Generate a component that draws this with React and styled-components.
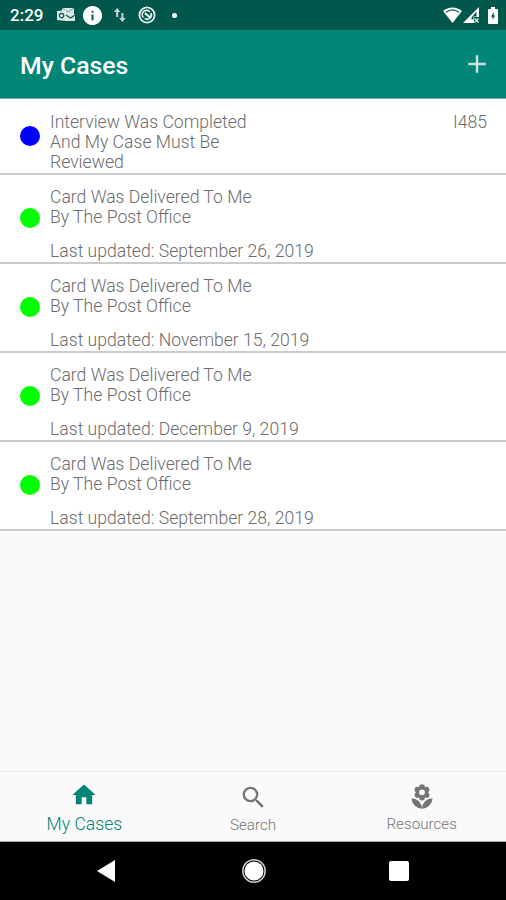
import React from 'react'
import styled, { createGlobalStyle } from 'styled-components'
import { MdAdd, MdHome, MdSearch, MdLocalFlorist, MdInfo } from 'react-icons/md'

const cases = [
    { color: '#0000ff', title: ['Interview Was Completed', 'And My Case Must Be', 'Reviewed'], form: 'I485' },
    { color: '#00ff00', title: ['Card Was Delivered To Me', 'By The Post Office'], updated: 'September 26, 2019' },
    { color: '#00ff00', title: ['Card Was Delivered To Me', 'By The Post Office'], updated: 'November 15, 2019' },
    { color: '#00ff00', title: ['Card Was Delivered To Me', 'By The Post Office'], updated: 'December 9, 2019' },
    { color: '#00ff00', title: ['Card Was Delivered To Me', 'By The Post Office'], updated: 'September 28, 2019' },
]

const MailIcon = () => (
    <svg width="18" height="16" viewBox="0 0 18 16">
        <path d="M5 1h12v7H5z" fill="#dce9e7" />
        <path d="M5 1l6 4 6-4" fill="none" stroke="#5f958d" strokeWidth="1" />
        <path d="M0 4l9-1v11l-9-1z" fill="#dce9e7" />
        <path d="M9 7h9v7H9z" fill="#dce9e7" />
        <circle cx="4.6" cy="8.6" r="2.2" fill="none" stroke="#00574b" strokeWidth="1.2" />
        <path d="M9 8l4.5 3L18 8" fill="none" stroke="#00574b" strokeWidth="1.1" />
    </svg>
)

const ArrowsIcon = () => (
    <svg width="12" height="16" viewBox="0 0 12 16" fill="#c4d9d6">
        <path d="M2.2 10V5H0l3.200-4 3.200 4H4.200v5zM7.400 6v5H5.200l3.200 4 3.200-4H9.400V6z" />
    </svg>
)

const SyncIcon = () => (
    <svg width="18" height="18" viewBox="0 0 18 18" fill="none" stroke="#e6efee">
        <circle cx="9" cy="9" r="7.6" strokeWidth="1.8" />
        <path d="M5.300 11.500a4.300 4.300 0 0 1 6.500-5.700M12.900 7a4.300 4.300 0 0 1-6.300 5.400" strokeWidth="1.700" />
        <path d="M6.800 7.200l5.300 4.300" strokeWidth="2.200" />
    </svg>
)

const WifiIcon = () => (
    <svg width="19" height="16" viewBox="0 0 19 16">
        <path d="M0 4.1C5.500-.6 13.500-.6 19 4.100L9.500 16z" fill="#fff" />
        <path d="M3 5.300c4-3 9-3 13 0" fill="none" stroke="#00574b" strokeWidth="1.200" />
    </svg>
)

const SignalIcon = () => (
    <svg width="16" height="16" viewBox="0 0 16 16">
        <path d="M0 16L16 0v10h-5v6z" fill="#fff" />
        <path d="M8.500 10.500l5-6v5h-3v3h-2z" fill="#00574b" />
        <path d="M11.500 11.500l4 4m0-4l-4 4" stroke="#c4d9d6" strokeWidth="1.600" />
    </svg>
)

const BatteryIcon = () => (
    <svg width="10" height="17" viewBox="0 0 10 17">
        <path d="M3 0h4v2h2q1 0 1 1v13q0 1-1 1H1q-1 0-1-1V3q0-1 1-1h2z" fill="#fff" />
        <path d="M5.700 5L3 9.800h1.600v3.200l2.600-4.500H5.700z" fill="#00574b" />
    </svg>
)

const CaseRow = ({ color, title, form, updated }) => {
    return (
        <Row $tall={!!updated}>
            <Dot $color={color} $tall={!!updated} />
            <div>
                {title.map((line) => <p key={line}>{line}</p>)}
                {updated && <Updated>Last updated: {updated}</Updated>}
            </div>
            {form && <FormName>{form}</FormName>}
        </Row>
    )
}

const App = () => {
    return (
        <Screen>
            <GlobalStyle />
            <StatusBar>
                <Clock>2:29</Clock>
                <Notices>
                    <MailIcon />
                    <MdInfo size={23} color="#fff" />
                    <ArrowsIcon />
                    <SyncIcon />
                    <SmallDot />
                </Notices>
                <Signals>
                    <WifiIcon />
                    <SignalIcon />
                    <BatteryIcon />
                </Signals>
            </StatusBar>

            <Header>
                <h1>My Cases</h1>
                <MdAdd size={30} color="#c9e4e1" />
            </Header>

            <List>
                {cases.map((item, i) => <CaseRow key={i} {...item} />)}
            </List>

            <Tabs>
                <Tab $active>
                    <MdHome size={28} />
                    <span>My Cases</span>
                </Tab>
                <Tab>
                    <MdSearch size={29} />
                    <span>Search</span>
                </Tab>
                <Tab>
                    <MdLocalFlorist size={28} />
                    <span>Resources</span>
                </Tab>
            </Tabs>

            <SystemNav>
                <svg width="18" height="22" viewBox="0 0 18 22"><path d="M0 11L18 0v22z" fill="#fff" /></svg>
                <svg width="24" height="24" viewBox="0 0 24 24">
                    <circle cx="12" cy="12" r="11.200" fill="none" stroke="#ccc" strokeWidth="1.500" />
                    <circle cx="12" cy="12" r="9.500" fill="#fff" />
                </svg>
                <Square />
            </SystemNav>
        </Screen>
    )
}

export default App;

const GlobalStyle = createGlobalStyle`
  *{
    box-sizing:border-box;
  }
  body{
    margin:0;
    font-family: Roboto, sans-serif;
  }
  h1, p{
    margin:0;
  }
  svg{
    display:block;
    flex-shrink:0;
  }
`
const Screen = styled.div`
  width:100vw;
  height:100vh;
  display:flex;
  flex-direction:column;
  background:#fafafa;
  overflow:hidden;
`
const StatusBar = styled.div`
  height:30px;
  flex-shrink:0;
  display:flex;
  align-items:center;
  padding:0 8px 0 10px;
  background:#00574b;
`
const Clock = styled.div`
  width:47px;
  color:#fff;
  font-size:17px;
  font-weight:500;
`
const Notices = styled.div`
  display:flex;
  align-items:center;
  > :nth-child(2){ margin-left:6px; }
  > :nth-child(3){ margin-left:10px; }
  > :nth-child(4){ margin-left:12px; }
`
const SmallDot = styled.div`
  width:5px;
  height:5px;
  border-radius:50%;
  margin-left:16px;
  background:#fff;
`
const Signals = styled.div`
  display:flex;
  align-items:center;
  margin-left:auto;
  > :nth-child(2){ margin-left:1px; }
  > :nth-child(3){ margin-left:9px; }
`
const Header = styled.div`
  height:69px;
  flex-shrink:0;
  display:flex;
  align-items:center;
  justify-content:space-between;
  padding:0 14px 0 20px;
  background:#008577;
  border-bottom:1px solid #66b6ad;
  h1{
    padding-top:2px;
    color:#fff;
    font-size:24.8px;
    font-weight:500;
  }
`
const List = styled.div`
  flex:1;
`
const Row = styled.div`
  height:${props => props.$tall ? '89px' : '76px'};
  display:flex;
  align-items:flex-start;
  padding:${props => props.$tall ? '12px' : '13px'} 19px 0 20px;
  background:#fff;
  border-bottom:2px solid #cbcbcb;
  color:#6c6c6c;
  font-size:17.6px;
  font-weight:300;
  line-height:20px;
`
const Dot = styled.div`
  width:20px;
  height:20px;
  border-radius:50%;
  margin:${props => props.$tall ? '21px' : '14px'} 10px 0 0;
  background:${props => props.$color};
`
const Updated = styled.p`
  padding-top:14px;
`
const FormName = styled.div`
  margin-left:auto;
`
const Tabs = styled.div`
  height:71px;
  flex-shrink:0;
  display:flex;
  border-top:1px solid #ededed;
  border-bottom:1px solid #aaa;
`
const Tab = styled.div`
  flex:1;
  display:flex;
  flex-direction:column;
  align-items:center;
  padding-top:${props => props.$active ? '9px' : '11px'};
  color:${props => props.$active ? '#008577' : '#757575'};
  span{
    margin-top:${props => props.$active ? '5px' : '3px'};
    font-size:${props => props.$active ? '17.6px' : '15.2px'};
    font-weight:${props => props.$active ? 350 : 300};
    line-height:20px;
  }
`
const SystemNav = styled.div`
  height:58px;
  flex-shrink:0;
  display:flex;
  align-items:center;
  justify-content:space-between;
  padding:0 97px 0 97px;
  background:#000;
  > :nth-child(2){ margin-left:3px; }
`
const Square = styled.div`
  width:20px;
  height:20px;
  border-radius:2px;
  background:#fff;
`
